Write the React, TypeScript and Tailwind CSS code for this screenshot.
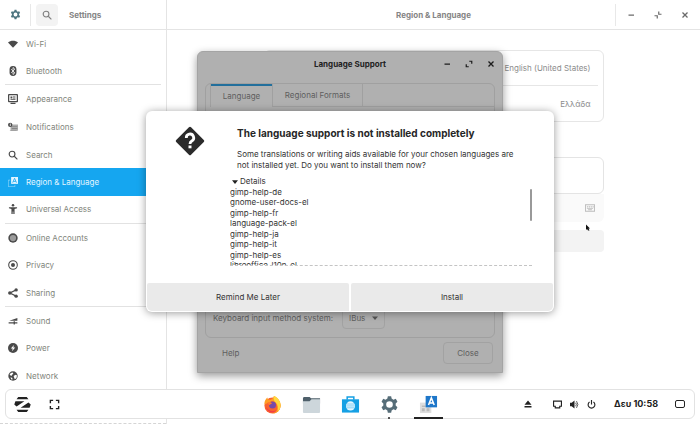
import type { ReactNode } from "react";

type NavItem = { label: string; icon: ReactNode; active?: boolean; divider?: boolean };

function Icon({ children, className = "size-[11px]", box = 16 }: { children: ReactNode; className?: string; box?: number }) {
  return (
    <svg viewBox={`0 0 ${box} ${box}`} className={`${className} shrink-0`} fill="currentColor" aria-hidden="true">
      {children}
    </svg>
  );
}

const GEAR =
  "M6.600 1h2.800l.4 2 1.500.9 2-.7 1.400 2.400-1.500 1.500v1.800l1.500 1.500-1.400 2.400-2-.7-1.500.9-.4 2H6.600l-.4-2-1.500-.9-2 .7-1.400-2.400 1.500-1.500V7.100L1.300 5.600l1.400-2.400 2 .7L6.200 3zM8 5.200a2.800 2.800 0 1 0 0 5.600 2.800 2.800 0 0 0 0-5.600z";

const SearchShape = () => (
  <g fill="none" stroke="currentColor" strokeWidth="1.8">
    <circle cx="6.500" cy="6.500" r="4.600" />
    <path d="M10 10l5 5" />
  </g>
);

const navItems: NavItem[] = [
  { label: "Wi-Fi", icon: <path d="M0 5.500C4 2 12 2 16 5.500L8 14z" /> },
  {
    label: "Bluetooth",
    divider: true,
    icon: (
      <>
        <rect x="2.500" width="11" height="16" rx="5.500" />
        <path d="M5 5l6 6-3 2.600V2.400L11 5l-6 6" fill="none" stroke="#fff" strokeWidth="1.200" />
      </>
    ),
  },
  {
    label: "Appearance",
    icon: (
      <>
        <path fillRule="evenodd" d="M1.500 0h13A1.500 1.500 0 0 1 16 1.500v10a1.500 1.500 0 0 1-1.500 1.500h-13A1.500 1.500 0 0 1 0 11.500v-10A1.500 1.500 0 0 1 1.500 0zM2 2v9h12V2z" />
        <path d="M4 4h3v3H4zM8 4h4v1H8zM8 6h4v1H8zM4 8h8v1H4zM4 14h8v2H4z" />
      </>
    ),
  },
  {
    label: "Notifications",
    icon: (
      <>
        <path d="M4 4h12v10H4z" opacity=".45" />
        <path d="M6 7h9v1H6zM6 10h9v1H6zM3 13h11v1H3z" opacity=".5" />
        <circle cx="3.500" cy="4.500" r="3.500" />
        <path d="M3 2.500h1.200v4H3z" fill="#fff" />
      </>
    ),
  },
  { label: "Search", icon: <SearchShape /> },
  {
    label: "Region & Language",
    active: true,
    icon: (
      <>
        <path d="M5 0h11v11H5z" />
        <path d="M3.500 5H.5v10.500H11V13" fill="none" stroke="currentColor" opacity=".7" />
        <path d="M7.500 9l3-7 3 7M8.500 7h4" fill="none" stroke="#15a6f0" strokeWidth="1.300" />
      </>
    ),
  },
  {
    label: "Universal Access",
    divider: true,
    icon: (
      <>
        <circle cx="8" cy="2" r="2" />
        <path d="M1.500 5h13v1.800L10.500 8v8h-2v-4h-1v4h-2V8l-4-1.200z" />
      </>
    ),
  },
  {
    label: "Online Accounts",
    icon: (
      <>
        <circle cx="8" cy="8" r="7.500" />
        <circle cx="8" cy="8" r="5" fill="#9b9b9b" />
      </>
    ),
  },
  {
    label: "Privacy",
    icon: (
      <>
        <circle cx="8" cy="8" r="6.900" fill="none" stroke="currentColor" strokeWidth="1.700" />
        <circle cx="8" cy="8" r="3.200" />
      </>
    ),
  },
  {
    label: "Sharing",
    divider: true,
    icon: (
      <>
        <path d="M13 3L3 8l10 5" fill="none" stroke="currentColor" strokeWidth="1.800" />
        <circle cx="13" cy="3" r="2.700" />
        <circle cx="3" cy="8" r="2.900" />
        <circle cx="13" cy="13" r="2.700" />
      </>
    ),
  },
  { label: "Sound", icon: <path d="M2 7.500L15 3v4.500zM1 10h8V8.500h2V10h4v1.800h-4V13.500H9v-1.700H1z" /> },
  {
    label: "Power",
    icon: (
      <>
        <circle cx="8" cy="8" r="8" />
        <path d="M9.500 3L4.500 8.800h3L6.500 13l5-5.800h-3z" fill="#fff" />
      </>
    ),
  },
  {
    label: "Network",
    icon: (
      <>
        <circle cx="8" cy="8" r="7.500" />
        <path d="M2.500 6l2-3 3-.5 1 2-2 1.500-1 2zM9 8l3-2 2.500 1-1 4-2.500 2-1-2zM4 10l3 1v3l-2-1z" fill="#fff" />
      </>
    ),
  },
];

const packages = [
  "gimp-help-de",
  "gnome-user-docs-el",
  "gimp-help-fr",
  "language-pack-el",
  "gimp-help-ja",
  "gimp-help-it",
  "gimp-help-es",
  "libreoffice-l10n-el",
];

const RestoreShape = ({ inward = false }: { inward?: boolean }) => (
  <path
    d={inward ? "M9.500 1v5.500H15M1 9.500h5.500V15" : "M8.500 2.500h5v5M2.500 8.500v5h5"}
    fill="none"
    stroke="currentColor"
    strokeWidth="2.400"
  />
);

function WindowButtons({ inward = false, className }: { inward?: boolean; className: string }) {
  return (
    <div className={`flex items-center ${className}`}>
      <button aria-label="Minimize" className="grid size-4 place-items-center">
        <Icon className="size-2"><path d="M3 7h11v2.500H3z" /></Icon>
      </button>
      <button aria-label="Restore" className="grid size-4 place-items-center">
        <Icon className="size-2"><RestoreShape inward={inward} /></Icon>
      </button>
      <button aria-label="Close window" className="grid size-4 place-items-center">
        <Icon className="size-2"><path d="M3 3l10 10M13 3L3 13" stroke="currentColor" strokeWidth="2.600" /></Icon>
      </button>
    </div>
  );
}

function Sidebar() {
  return (
    <aside className="flex w-[167px] shrink-0 flex-col border-r border-[#e4e4e4]">
      <header className="flex h-[30px] shrink-0 items-center border-b border-[#e4e4e4] pl-[10px]">
        <Icon className="size-[11px] text-[#4e7580]"><path fillRule="evenodd" d={GEAR} /></Icon>
        <div className="ml-[9px] h-[22px] w-px bg-[#e8e8e8]" />
        <button aria-label="Search settings" className="ml-[5px] grid size-[22px] place-items-center rounded bg-[#f3f3f3] text-[#808080]">
          <Icon className="size-[10px]"><SearchShape /></Icon>
        </button>
        <h1 className="ml-[11px] font-bold text-[#858585]">Settings</h1>
      </header>
      <nav className="flex flex-1 flex-col pb-[33px]">
        {navItems.map((item) => (
          <div key={item.label} className="flex flex-1 flex-col">
            <a
              href="#"
              className={`flex flex-1 items-center gap-2 pl-2 ${item.active ? "bg-[#15a6f0] text-[#e4f5ff]" : "text-[#7f857b]"}`}
            >
              <Icon className={item.active ? "size-[10px]" : "size-[10px] text-[#4a4a4a]"}>{item.icon}</Icon>
              {item.label}
            </a>
            {item.divider && <div className="mx-[5px] h-px bg-[#e2e2e2]" />}
          </div>
        ))}
      </nav>
      <div className="border-b border-dashed border-[#d5d5d5]" />
    </aside>
  );
}

function RegionPanel() {
  return (
    <main className="flex flex-1 flex-col">
      <header className="grid h-[30px] shrink-0 grid-cols-[1fr_auto_1fr] items-center border-b border-[#e4e4e4]">
        <h2 className="col-start-2 font-bold text-[#858585]">Region &amp; Language</h2>
        <div className="flex h-[22px] justify-end">
          <div className="flex border-l border-[#e8e8e8] px-[7px]">
            <WindowButtons inward className="gap-[11px] text-[#6a6a6a]" />
          </div>
        </div>
      </header>
      <div className="mx-auto flex w-[340px] flex-col pt-5 text-[#8c8c8c]">
        <div className="rounded-md border border-[#e6e6e6] px-[5px]">
          <div className="flex h-[35px] items-center justify-end border-b border-[#e6e6e6] pr-[7px]">English (United States)</div>
          <div className="flex h-[35px] items-center justify-end pr-[7px]">Ελλάδα</div>
        </div>
        <div className="mt-[35px] h-[37px] rounded-md border border-[#e4e4e4]" />
        <div className="flex h-7 items-center justify-end rounded-b-md bg-[#fafafa] pr-[9px] text-[#bdbdbd]">
          <Icon className="size-[10px]">
            <path fillRule="evenodd" d="M0 2h16v12H0zM1.500 3.500v9h13v-9z" />
            <path d="M3 5h2v2H3zM6 5h2v2H6zM9 5h2v2H9zM12 5h2v2h-2zM3 8h10v1H3zM5 10h6v1.500H5z" />
          </Icon>
        </div>
        <button aria-label="Manage installed languages" className="mt-2 h-[22px] rounded bg-[#f3f3f3]" />
      </div>
    </main>
  );
}

function LanguageSupport() {
  return (
    <section className="flex h-[322px] w-[306px] flex-col rounded-t-md border border-[#a4a4a4] bg-[#b0b0b0] text-[#5e5e5e] shadow-[0_3px_9px_rgba(0,0,0,0.4)]">
      <header className="mb-[7px] grid h-6 shrink-0 grid-cols-[1fr_auto_1fr] items-center px-[3px] text-[#1c1c1c]">
        <h2 className="col-start-2 font-bold text-[#222]">Language Support</h2>
        <WindowButtons className="justify-end gap-[6px]" />
      </header>
      <div className="mx-[7px] flex flex-1 flex-col rounded-md border border-[#a0a0a0]">
        <div role="tablist" className="flex h-[23px] pl-1">
          <button role="tab" aria-selected="true" className="w-[63px] border-x border-[#a0a0a0] shadow-[inset_0_2px_#226f9c]">
            Language
          </button>
          <button role="tab" aria-selected="false" className="w-[90px] border-r border-b border-[#a0a0a0]">
            Regional Formats
          </button>
          <div className="flex-1 border-b border-[#a0a0a0]" />
        </div>
        <div className="mt-auto mb-2 flex items-center gap-1 pl-[7px]">
          <label htmlFor="input-method" className="min-w-[125px]">Keyboard input method system:</label>
          <div className="relative flex items-center">
            <select id="input-method" defaultValue="IBus" className="h-[22px] w-[43px] appearance-none rounded border border-[#a2a2a2] pl-[6px]">
              <option>IBus</option>
            </select>
            <Icon className="pointer-events-none absolute right-[7px] size-[6px] text-[#555]"><path d="M0 4h16l-8 9z" /></Icon>
          </div>
        </div>
      </div>
      <footer className="flex h-[34px] shrink-0 items-start justify-between pt-1 pr-[9px] pl-[7px]">
        <button className="h-[22px] px-[17px]">Help</button>
        <button className="h-[22px] w-[50px] rounded border border-[#a2a2a2]">Close</button>
      </footer>
    </section>
  );
}

function InstallDialog() {
  return (
    <section role="alertdialog" aria-labelledby="install-title" className="flex h-[201px] w-[408px] flex-col rounded-md bg-white p-px text-[#333] shadow-[0_1px_8px_rgba(0,0,0,0.4)]">
      <div className="flex flex-1 pt-[14px] pr-[21px] pl-7">
        <Icon className="size-[30px] text-[#2b2b2b]" box={30}>
          <rect x="4.500" y="4.500" width="21" height="21" rx="1.500" transform="rotate(45 15 15)" />
          <path d="M11.300 12a3.700 3.700 0 1 1 5.500 3c-1.300.8-1.800 1.300-1.800 3" fill="none" stroke="#fff" strokeWidth="2.800" />
          <path d="M13.500 19.500h3v2.800h-3z" fill="#fff" />
        </Icon>
        <div className="ml-[25px] flex-1">
          <h2 id="install-title" className="pl-[7px] text-[10px] leading-[14px] font-bold text-[#262626]">
            The language support is not installed completely
          </h2>
          <p className="mt-[9px] w-[292px] pl-[7px] leading-[11px]">
            Some translations or writing aids available for your chosen languages are not installed yet. Do you want to install them now?
          </p>
          <details open className="mt-[5px]">
            <summary className="flex items-center gap-[2px] pl-[2px] leading-[11px]">
              <Icon className="size-[6px] text-[#222]"><path d="M0 3h16l-8 10z" /></Icon>
              Details
            </summary>
            <div className="flex h-[79px] w-[302px] items-start justify-between overflow-hidden border-b border-dashed border-[#c4c4c4]">
              <ul className="grid h-[83px] content-between leading-[10px]">
                {packages.map((name) => (
                  <li key={name}>{name}</li>
                ))}
              </ul>
              <div className="mt-[2px] h-8 w-[2px] rounded-full bg-[#999]" />
            </div>
          </details>
        </div>
      </div>
      <div className="grid grid-cols-2 gap-[2px]">
        <button className="h-7 rounded-t-[2px] rounded-bl-[5px] bg-[#eaeaea]">Remind Me Later</button>
        <button className="h-7 rounded-t-[2px] rounded-br-[5px] bg-[#eaeaea]">Install</button>
      </div>
    </section>
  );
}

function TaskButton({ label, children, indicator }: { label: string; children: ReactNode; indicator?: "dot" | "bar" }) {
  return (
    <button aria-label={label} className="relative flex h-full w-[39px] items-center justify-center">
      {children}
      {indicator === "dot" && <span className="absolute -bottom-px size-[2px] rounded-full bg-[#222]" />}
      {indicator === "bar" && <span className="absolute -bottom-px h-[2px] w-[29px] bg-[#222]" />}
    </button>
  );
}

function Taskbar() {
  return (
    <footer className="absolute inset-x-[5px] bottom-[5px] grid h-[30px] grid-cols-[1fr_auto_1fr] items-center rounded-md border border-[#e2e2e2] bg-white text-[#222]">
      <div className="flex items-center gap-[18px] pl-2">
        <button aria-label="Zorin menu">
          <Icon className="size-[17px]" box={18}>
            <path d="M4.500 1h9l1.800 2.500H2.700zM4.500 17h9l1.800-2.500H2.700z" />
            <path d="M1.500 5.500h9.500L2.700 11 .3 9zM16.500 12.500H7L15.300 7l2.400 2z" />
          </Icon>
        </button>
        <button aria-label="Show desktop">
          <Icon className="size-[11px]">
            <path d="M2 6V2h4M10 2h4v4M14 10v4h-4M6 14H2v-4" fill="none" stroke="currentColor" strokeWidth="2" />
          </Icon>
        </button>
      </div>
      <div className="flex h-full">
        <TaskButton label="Firefox">
          <Icon className="size-[19px]" box={20}>
            <circle cx="10" cy="11" r="8.500" fill="#f9622f" />
            <path d="M1.500 10C1.300 6 3 4 4.500 2.500 5 4.500 6 5 8 5c2-1 3-2 3.500-4 3 1 7.500 5.500 7 10.500-.5 4.500-4 8-8.500 8 3.500-1 5.500-4 5-7.500C14.500 8.500 12 6.500 9 6.500z" fill="#ff9d24" />
            <path d="M11.500 1c3.500 1 7.500 5.500 7 10.500-.3 2.500-1.500 4.500-3 6 .8-4 .2-7.500-2-9.500-1.500-1.500-3-3.500-2-7z" fill="#ffd83d" />
            <path d="M3 12c2.500 5 8 6.500 12 3.500-3 4-10 4-12-3.500z" fill="#f0384c" />
            <circle cx="10" cy="10.500" r="3.700" fill="#764aa8" />
            <path d="M4.500 8c2-1 4-.5 5 1-1 .2-1.800.8-2.500 1.700z" fill="#ff7b2b" />
          </Icon>
        </TaskButton>
        <TaskButton label="Files">
          <Icon className="size-[19px]" box={20}>
            <path d="M1 3.500C1 2.700 1.500 2 2.500 2h5.500l1.500 1.500h9.500V9H1z" fill="#4f606b" />
            <path d="M1 6.500h7l2-2h9V18a1 1 0 0 1-1 1H2a1 1 0 0 1-1-1z" fill="#cdd6db" />
          </Icon>
        </TaskButton>
        <TaskButton label="Software">
          <Icon className="size-[19px]" box={20}>
            <path d="M6.500 5V2h7v3" fill="none" stroke="#15a0e4" strokeWidth="1.600" />
            <path d="M1 4.500h18v14H1z" fill="#15a0e4" />
            <circle cx="10" cy="11.500" r="4.800" fill="#e5f6ff" />
            <path d="M6 9.500h8M5.500 11.500h9M6 13.500h8" stroke="#6bc5f0" strokeWidth=".8" />
          </Icon>
        </TaskButton>
        <TaskButton label="Settings" indicator="dot">
          <Icon className="size-[19px] text-[#566d78]"><path fillRule="evenodd" d={GEAR} /></Icon>
        </TaskButton>
        <TaskButton label="Language Support" indicator="bar">
          <Icon className="size-[19px]" box={20}>
            <path d="M1 8h12v11H1z" fill="#dedede" />
            <path d="M3 11h4v1.500H3zM3 14h3v3H3zM8 14h3v3H8z" fill="#bbb" />
            <path d="M7 1h12v12H7z" fill="#1e77c9" />
            <path d="M10 10.500l3-7.500 3 7.500M11 8.300h4" fill="none" stroke="#fff" strokeWidth="1.600" />
          </Icon>
        </TaskButton>
      </div>
      <div className="flex items-center justify-end pr-[9px]">
        <button aria-label="Eject">
          <Icon className="size-2"><path d="M8 1l7 8.500H1zM1 12h14v3H1z" /></Icon>
        </button>
        <div className="ml-[21px] flex items-center gap-2">
          <Icon className="size-[9px]"><path fillRule="evenodd" d="M0 1h16v11h-3v3H3v-3H0zM2 3v7h3v3h6v-3h3V3z" /></Icon>
          <Icon className="size-[9px]">
            <path d="M0 5h3l5-4v14l-5-4H0z" />
            <path d="M10 5q2.500 3 0 6M11.500 2q5 6 0 12" fill="none" stroke="currentColor" strokeWidth="1.300" />
          </Icon>
          <Icon className="size-[9px]">
            <path d="M4.500 3.500a6 6 0 1 0 7 0M8 0v8" fill="none" stroke="currentColor" strokeWidth="2" />
          </Icon>
        </div>
        <time className="ml-[18px] text-[9px] font-bold">Δευ 10:58</time>
        <button aria-label="Notifications" className="ml-[17px] h-2 w-[10px] rounded-[2px] border border-[#222]" />
      </div>
    </footer>
  );
}

export default function App() {
  return (
    <div className="relative flex h-screen overflow-hidden bg-white font-['Inter',sans-serif] text-[8px]">
      <Sidebar />
      <RegionPanel />
      <div className="absolute inset-0 grid place-items-center">
        <LanguageSupport />
      </div>
      <div className="absolute inset-0 grid place-items-center pb-px">
        <InstallDialog />
      </div>
      <Taskbar />
      <svg viewBox="0 0 8 12" className="absolute top-[224px] left-[586px] h-[7px] w-1" aria-hidden="true">
        <path d="M0 0l8 8H5l2 4H4L2 9l-2 2z" fill="#111" />
      </svg>
    </div>
  );
}
